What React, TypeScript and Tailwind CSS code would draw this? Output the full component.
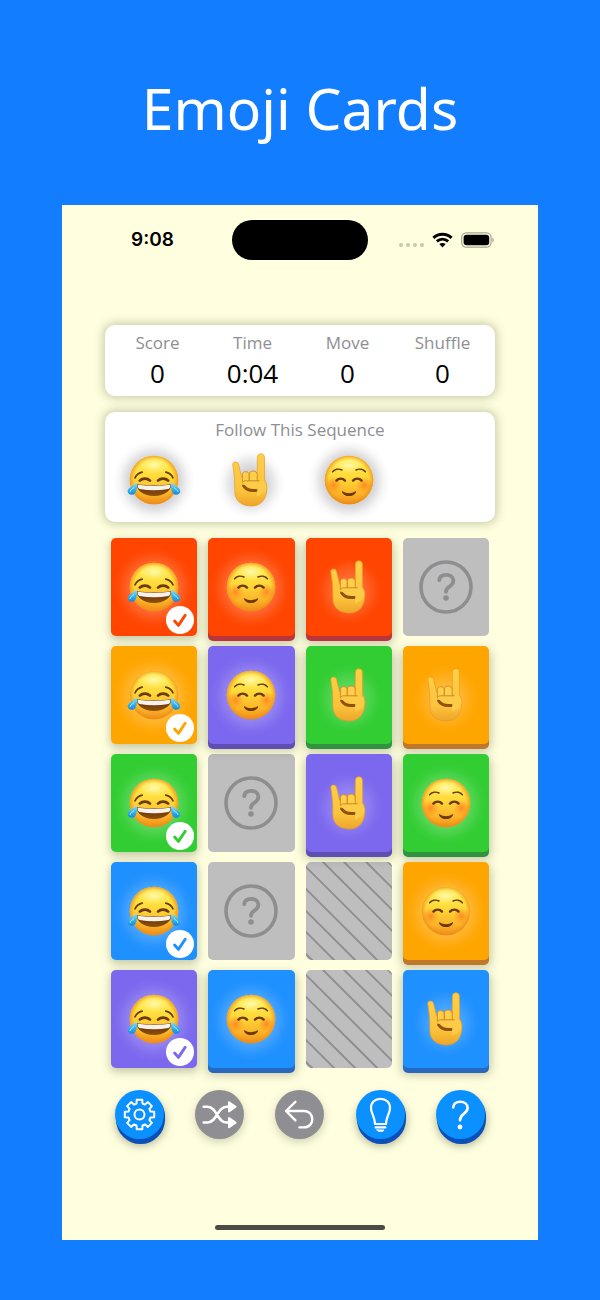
import React, { useState } from "react";

type Emoji = "joy" | "horns" | "blush";
type Color = "red" | "orange" | "green" | "blue" | "purple";
type Card = { kind: "emoji" | "hidden" | "empty"; emoji?: Emoji; color?: Color; done?: boolean };

const faceColors: Record<Color, string> = {
  red: "bg-[#ff4500]",
  orange: "bg-[#ffa500]",
  green: "bg-[#32cd32]",
  blue: "bg-[#1e90ff]",
  purple: "bg-[#7b68ee]",
};

const raisedShadows: Record<Color, string> = {
  red: "shadow-[0_5px_0_#bb363a,0_5px_10px_2px_rgba(60,70,30,0.3)]",
  orange: "shadow-[0_5px_0_#c0782c,0_5px_10px_2px_rgba(60,70,30,0.3)]",
  green: "shadow-[0_5px_0_#2f9340,0_5px_10px_2px_rgba(60,70,30,0.3)]",
  blue: "shadow-[0_5px_0_#2869bd,0_5px_10px_2px_rgba(60,70,30,0.3)]",
  purple: "shadow-[0_5px_0_#604fb3,0_5px_10px_2px_rgba(60,70,30,0.3)]",
};

const checkColors: Record<Color, string> = {
  red: "text-[#ff4500]",
  orange: "text-[#ffa500]",
  green: "text-[#32cd32]",
  blue: "text-[#1e90ff]",
  purple: "text-[#7b68ee]",
};

const stats = [
  { label: "Score", value: "0" },
  { label: "Time", value: "0:04" },
  { label: "Move", value: "0" },
  { label: "Shuffle", value: "0" },
];

const sequence: Emoji[] = ["joy", "horns", "blush"];

const board: Card[] = [
  { kind: "emoji", emoji: "joy", color: "red", done: true },
  { kind: "emoji", emoji: "blush", color: "red" },
  { kind: "emoji", emoji: "horns", color: "red" },
  { kind: "hidden" },
  { kind: "emoji", emoji: "joy", color: "orange", done: true },
  { kind: "emoji", emoji: "blush", color: "purple" },
  { kind: "emoji", emoji: "horns", color: "green" },
  { kind: "emoji", emoji: "horns", color: "orange" },
  { kind: "emoji", emoji: "joy", color: "green", done: true },
  { kind: "hidden" },
  { kind: "emoji", emoji: "horns", color: "purple" },
  { kind: "emoji", emoji: "blush", color: "green" },
  { kind: "emoji", emoji: "joy", color: "blue", done: true },
  { kind: "hidden" },
  { kind: "empty" },
  { kind: "emoji", emoji: "blush", color: "orange" },
  { kind: "emoji", emoji: "joy", color: "purple", done: true },
  { kind: "emoji", emoji: "blush", color: "blue" },
  { kind: "empty" },
  { kind: "emoji", emoji: "horns", color: "blue" },
];

// Gradients shared by every emoji on the page
function EmojiDefs() {
  return (
    <svg className="absolute h-0 w-0" aria-hidden="true">
      <defs>
        <linearGradient id="skin" x1="0" y1="0" x2="0" y2="1">
          <stop offset="0" stopColor="#fff04f" />
          <stop offset="0.45" stopColor="#ffd93a" />
          <stop offset="0.8" stopColor="#fbb126" />
          <stop offset="1" stopColor="#ee8f1c" />
        </linearGradient>
        <radialGradient id="rim" cx="0.5" cy="0.5" r="0.5">
          <stop offset="0.8" stopColor="#f0951b" stopOpacity="0" />
          <stop offset="1" stopColor="#ec8a14" stopOpacity="0.75" />
        </radialGradient>
        <radialGradient id="shine" cx="0.5" cy="0.5" r="0.5">
          <stop offset="0" stopColor="#fffcc0" stopOpacity="0.9" />
          <stop offset="1" stopColor="#fff27a" stopOpacity="0" />
        </radialGradient>
        <radialGradient id="cheek" cx="0.5" cy="0.5" r="0.5">
          <stop offset="0" stopColor="#ff6a1a" stopOpacity="0.65" />
          <stop offset="1" stopColor="#ff7a1a" stopOpacity="0" />
        </radialGradient>
        <linearGradient id="tear" x1="0" y1="0" x2="0" y2="1">
          <stop offset="0" stopColor="#9be6fb" />
          <stop offset="0.5" stopColor="#38b8f2" />
          <stop offset="1" stopColor="#1687d8" />
        </linearGradient>
        <linearGradient id="mouth" x1="0" y1="0" x2="0" y2="1">
          <stop offset="0" stopColor="#5e2c08" />
          <stop offset="1" stopColor="#8f5108" />
        </linearGradient>
        <linearGradient id="hand" x1="0" y1="0" x2="0" y2="1">
          <stop offset="0" stopColor="#ffd046" />
          <stop offset="0.7" stopColor="#fcc43c" />
          <stop offset="1" stopColor="#eda52a" />
        </linearGradient>
        <radialGradient id="glow">
          <stop offset="0.4" stopColor="#fff" stopOpacity="0.28" />
          <stop offset="0.65" stopColor="#fff" stopOpacity="0.15" />
          <stop offset="0.85" stopColor="#fff" stopOpacity="0.04" />
          <stop offset="1" stopColor="#fff" stopOpacity="0" />
        </radialGradient>
        <radialGradient id="shade">
          <stop offset="0.4" stopColor="#50505c" stopOpacity="0.36" />
          <stop offset="0.65" stopColor="#50505c" stopOpacity="0.2" />
          <stop offset="0.85" stopColor="#50505c" stopOpacity="0.05" />
          <stop offset="1" stopColor="#50505c" stopOpacity="0" />
        </radialGradient>
      </defs>
    </svg>
  );
}

function FaceBase() {
  return (
    <>
      <circle cx="27" cy="27" r="24.3" fill="url(#skin)" />
      <circle cx="27" cy="27" r="24.3" fill="url(#rim)" />
      <ellipse cx="27" cy="12" rx="17" ry="9" fill="url(#shine)" />
    </>
  );
}

function EmojiIcon({ name, halo }: { name: Emoji; halo: "glow" | "shade" }) {
  return (
    <svg viewBox="0 0 54 54" className="h-[54px] w-[54px] overflow-visible" role="img" aria-label={name}>
      <ellipse
        cx="27"
        cy={name === "horns" ? 31 : 28}
        rx={name === "horns" ? 34 : 41}
        ry={name === "horns" ? 35 : 41}
        opacity={name === "horns" ? 0.7 : 1}
        fill={halo === "glow" ? "url(#glow)" : "url(#shade)"}
      />
      {name === "joy" && (
        <>
          <FaceBase />
          <g fill="none" stroke="#6b3a06" strokeLinecap="round">
            <path d="M8 24.8C9.5 21.8 12 19.8 15.2 19.2M38.8 19.2C42 19.8 44.5 21.8 46 24.8" strokeWidth="1.7" />
            <path d="M12.8 27.6C15.4 25 20.5 25 23 27.6M31 27.6C33.5 25 38.6 25 41.2 27.6" strokeWidth="2.7" />
          </g>
          <path d="M9.8 31.2C20 32.6 34 32.6 44.2 31.2C44.8 36.8 37.6 43 27 43S9.2 36.8 9.8 31.2Z" fill="url(#mouth)" />
          <path d="M10.6 31.8C21 33 33 33 43.4 31.8C43.6 34 42.8 35.6 41.4 36C32 37.8 22 37.8 12.6 36C11.2 35.6 10.4 34 10.6 31.8Z" fill="#f6f1ea" />
          <path d="M9.6 29C10.4 33 10 37.2 8.4 39.8C6.4 42.8 2.4 42.2 1 39.6C-0.8 35.6 5 34.2 9.6 29Z" fill="url(#tear)" />
          <path d="M44.4 29C43.6 33 44 37.2 45.6 39.8C47.6 42.8 51.6 42.2 53 39.6C54.8 35.6 49 34.2 44.4 29Z" fill="url(#tear)" />
          <path d="M3 38.6C3 37 5.4 36.2 7 34.6M51 38.6C51 37 48.6 36.2 47 34.6" fill="none" stroke="#d5f6ff" strokeWidth="1" strokeLinecap="round" opacity="0.8" />
        </>
      )}
      {name === "blush" && (
        <>
          <FaceBase />
          <circle cx="11.5" cy="32" r="8.5" fill="url(#cheek)" />
          <circle cx="42.5" cy="32" r="8.5" fill="url(#cheek)" />
          <g fill="none" stroke="#6b3a06" strokeLinecap="round">
            <path d="M10.6 18.8C12.6 16.2 16.6 15.4 20 17M34 17C37.4 15.4 41.4 16.2 43.4 18.8" strokeWidth="1.5" />
            <path d="M14.4 27.6C16.6 25 20.8 25 23 27.6M31 27.6C33.2 25 37.4 25 39.6 27.6" strokeWidth="2.4" />
          </g>
          <path d="M20.6 38.2C24 40.8 30 40.8 33.4 38.2C33.8 38 34.2 38.4 34 39.2C31.4 44.4 22.6 44.4 20 39.2C19.8 38.4 20.2 38 20.6 38.2Z" fill="#6b3a06" />
        </>
      )}
      {name === "horns" && (
        <>
          <path
            d="M9 13C8.2 10.8 9.4 9 11.2 9C13.4 9 14.4 10.2 14.8 12.4L17.6 24L33.2 22L33.4 4.4C33.4 2 34.8 0.8 36.9 0.8S40.4 2.2 40.4 4.4L40.6 27C42.8 30 43.4 34 42.6 39C41.2 47.6 36 53 27.6 53C18.4 53 12.2 48.6 11 41C10.6 36 11 30 10.6 25Z"
            fill="url(#hand)"
            stroke="#e79a28"
            strokeWidth="0.7"
          />
          <path d="M18.4 30V21.6C18.4 19.6 19.8 18.6 21.7 18.6S25.2 19.8 25.2 21.8V30Z" fill="#ffcf49" stroke="#d0862a" strokeWidth="0.9" />
          <path d="M25.4 30V21.2C25.4 19 27 18 29.2 18S33.2 19.4 33.2 21.4V30Z" fill="#ffcf49" stroke="#d0862a" strokeWidth="0.9" />
          <path d="M19.6 32.8C21.8 36.4 25.6 38.2 32 37.4" fill="none" stroke="#8f5210" strokeWidth="3" strokeLinecap="round" />
          <path
            d="M18.8 31C18 29.2 19 27.8 21.6 27.8H36.6C41.6 28 43 32 42 36C39.6 41.4 35.6 41.8 33.4 44C32.4 40.4 33 37.6 35 35.4C31 36 25.6 34.6 21.6 32.4C20.2 32 19.2 31.8 18.8 31Z"
            fill="#fccb48"
          />
          <path d="M18.8 29.4C19.4 28.2 20.2 27.8 21.6 27.8H35.6" fill="none" stroke="#c98022" strokeWidth="0.9" />
        </>
      )}
    </svg>
  );
}

function CheckBadge({ color }: { color: Color }) {
  return (
    <span className={`absolute right-[3px] bottom-[2px] flex h-7 w-7 items-center justify-center rounded-full bg-white ${checkColors[color]}`}>
      <svg viewBox="0 0 28 28" className="h-7 w-7" fill="none" stroke="currentColor" strokeWidth="2.9" strokeLinecap="round" strokeLinejoin="round">
        <path d="M8.6 15L12.4 19.4L19.2 9.2" />
      </svg>
    </span>
  );
}

function GameCard({ card, index }: { card: Card; index: number }) {
  if (card.kind === "hidden") {
    return (
      <button aria-label={`Hidden card ${index + 1}`} className="flex h-[98px] items-center justify-center rounded-[5px] bg-[#bebebe] text-[#8e8e90]">
        <svg viewBox="0 0 54 54" className="h-[54px] w-[54px]" fill="none" stroke="currentColor" strokeLinecap="round">
          <circle cx="27" cy="27" r="25" strokeWidth="3.6" />
          <path d="M20.2 20.2C20.6 16.6 23.4 14.9 27.2 14.9C31.4 14.9 34.4 17.2 34.4 20.6C34.4 23.2 33.2 24.8 30.8 26.4C28.2 28 27 29.2 27 31.8" strokeWidth="3.8" />
          <circle cx="27" cy="38" r="2.8" fill="currentColor" stroke="none" />
        </svg>
      </button>
    );
  }

  if (card.kind === "empty") {
    return (
      <div className="h-[98px] overflow-hidden rounded-[5px] bg-[#bebebe]">
        <svg viewBox="0 0 86 98" preserveAspectRatio="none" className="h-full w-full" stroke="#8e8e92" strokeWidth="1.9">
          {[-92, -70, -49, -27, -5, 17, 38, 60, 82].map((x) => (
            <line key={x} x1={x - 4} y1="-4" x2={x + 102} y2="102" />
          ))}
        </svg>
      </div>
    );
  }

  const color = card.color!;
  return (
    <button
      className={`relative flex h-[98px] items-center justify-center rounded-[5px] ${faceColors[color]} ${
        card.done ? "shadow-[0_3px_9px_1px_rgba(60,70,30,0.3)]" : raisedShadows[color]
      }`}
    >
      <EmojiIcon name={card.emoji!} halo="glow" />
      {card.done && <CheckBadge color={color} />}
    </button>
  );
}

function ToolButton({ label, disabled, children }: { label: string; disabled?: boolean; children: React.ReactNode }) {
  return (
    <button
      aria-label={label}
      disabled={disabled}
      className={`flex h-[49px] w-[49px] items-center justify-center rounded-full text-white ${
        disabled
          ? "bg-[#8e8e93] shadow-[0_3px_8px_rgba(60,70,30,0.25)]"
          : "bg-[#0a90ff] shadow-[1px_2px_0_#0a50b8,1px_5px_0_#0a50b8,1px_6px_9px_1px_rgba(60,70,30,0.4)]"
      }`}
    >
      <svg viewBox="0 0 49 49" className="h-[49px] w-[49px]" fill="none" stroke="currentColor" strokeWidth="2" strokeLinecap="round" strokeLinejoin="round">
        {children}
      </svg>
    </button>
  );
}

function StatusBar() {
  return (
    <div className="grid grid-cols-[1fr_136px_1fr] items-center pt-[15px]">
      <div className="pl-[11px] text-center font-['Inter'] text-[19px] leading-10 font-semibold text-black">9:08</div>
      <div className="h-10 rounded-full bg-black" />
      <div className="flex items-center justify-center gap-2 pr-[13px]">
        <div className="flex gap-[3px] pt-[10px]">
          {[0, 1, 2, 3].map((dot) => (
            <span key={dot} className="h-1 w-1 rounded-full bg-[#c8c8ac]" />
          ))}
        </div>
        <svg viewBox="0 0 21 16" className="h-4 w-[21px]" fill="none" stroke="#000" strokeWidth="3">
          <path d="M1.4 5.8C6.6 0.9 14.4 0.9 19.6 5.8M4.8 9.4C8.2 6.4 12.8 6.4 16.2 9.4" />
          <path d="M10.5 15.4L7.3 12C9.2 10.5 11.8 10.5 13.7 12Z" fill="#000" stroke="none" />
        </svg>
        <svg viewBox="0 0 33 16" className="h-4 w-[33px]">
          <rect x="0.7" y="0.8" width="29.4" height="14.4" rx="4.6" fill="none" stroke="#a5a58f" strokeWidth="1.2" />
          <rect x="2.6" y="2.7" width="25.6" height="10.6" rx="3" fill="#000" />
          <path d="M31.4 5.6C33.2 6.4 33.2 9.6 31.4 10.4Z" fill="#a5a58f" />
        </svg>
      </div>
    </div>
  );
}

function gearPath() {
  const teeth = 8;
  const points: string[] = [];
  for (let i = 0; i < teeth; i++) {
    const base = (i * 2 * Math.PI) / teeth - Math.PI / 2;
    [
      [-0.27, 11.4],
      [-0.19, 15],
      [0.19, 15],
      [0.27, 11.4],
    ].forEach(([turn, radius]) => {
      points.push(`${(24.5 + radius * Math.cos(base + turn)).toFixed(1)} ${(24.5 + radius * Math.sin(base + turn)).toFixed(1)}`);
    });
  }
  return `M${points.join("L")}Z`;
}

export default function App() {
  const [cards] = useState<Card[]>(board);

  return (
    <div className="min-h-screen bg-[#137dff] px-[62px] pb-[60px] font-['Open_Sans',sans-serif]">
      <EmojiDefs />
      <h1 className="flex h-[205px] items-center justify-center pt-3 text-center font-['Noto_Sans',sans-serif] text-[57px] leading-none whitespace-nowrap text-white">
        Emoji Cards
      </h1>

      <main className="bg-[#ffffe0]">
        <StatusBar />

        <div className="px-[43px] pt-[65px]">
          <dl className="grid grid-cols-4 rounded-[10px] bg-white px-[5px] pt-1.5 pb-[5px] shadow-[0_0_10px_2px_rgba(60,70,30,0.28)]">
            {stats.map((stat) => (
              <div key={stat.label} className="text-center">
                <dt className="text-[17px] leading-6 text-[#8e8e93]">{stat.label}</dt>
                <dd className="text-[26px] leading-9 text-black">{stat.value}</dd>
              </div>
            ))}
          </dl>

          <section className="mt-4 rounded-[10px] bg-white pt-1.5 pb-[15px] shadow-[0_0_10px_2px_rgba(60,70,30,0.28)]">
            <h2 className="text-center text-[17px] leading-6 text-[#8e8e93]">Follow This Sequence</h2>
            <div className="mt-[11px] grid grid-cols-4 justify-items-center">
              {sequence.map((name) => (
                <EmojiIcon key={name} name={name} halo="shade" />
              ))}
            </div>
          </section>

          <section className="mt-4 grid grid-cols-4 gap-x-[11px] gap-y-[10px] px-1.5">
            {cards.map((card, index) => (
              <GameCard key={index} card={card} index={index} />
            ))}
          </section>
        </div>

        <nav className="mt-[22px] grid grid-cols-5 justify-items-center px-[37px]">
          <ToolButton label="Settings">
            <path d={gearPath()} />
            <circle cx="24.5" cy="24.5" r="5" />
          </ToolButton>
          <ToolButton label="Shuffle" disabled>
            <path d="M8.6 16.8H12.6C22 16.8 22 32.6 31.6 32.6H34M8.6 32.6H12.6C22 32.6 22 16.8 31.6 16.8H34" strokeWidth="2.5" />
            <path d="M34 12.2L40.6 16.8L34 21.4ZM34 28L40.6 32.6L34 37.2Z" fill="currentColor" />
          </ToolButton>
          <ToolButton label="Undo" disabled>
            <path d="M20.4 11.8L11 21L20.4 30.4M11 21H29C40 21 40 37.4 29 37.4H24.4" strokeWidth="2.4" />
          </ToolButton>
          <ToolButton label="Hint">
            <path d="M19 34C19 26.4 15 24 15 18C15 12.4 19 8.8 24.5 8.8S34 12.4 34 18C34 24 30 26.4 30 34Z" strokeWidth="2.2" />
            <path d="M19.8 37.4H29.2" strokeWidth="2.4" />
            <path d="M21 40H28C27.4 42 21.6 42 21 40Z" fill="currentColor" strokeWidth="1" />
          </ToolButton>
          <ToolButton label="Help">
            <path d="M17.2 17.4C17.6 13.6 20.6 11.8 24.2 11.8C28.6 11.8 31.6 14.2 31.6 17.8C31.6 20.6 30.2 22.2 27.8 23.8C25.2 25.6 24 27 24 30.2" strokeWidth="2.6" />
            <circle cx="24" cy="37" r="2.4" fill="currentColor" stroke="none" />
          </ToolButton>
        </nav>

        <div className="flex justify-center pt-[86px] pb-[10px]">
          <div className="h-[5px] w-[170px] rounded-full bg-[#4b4b48]" />
        </div>
      </main>
    </div>
  );
}
